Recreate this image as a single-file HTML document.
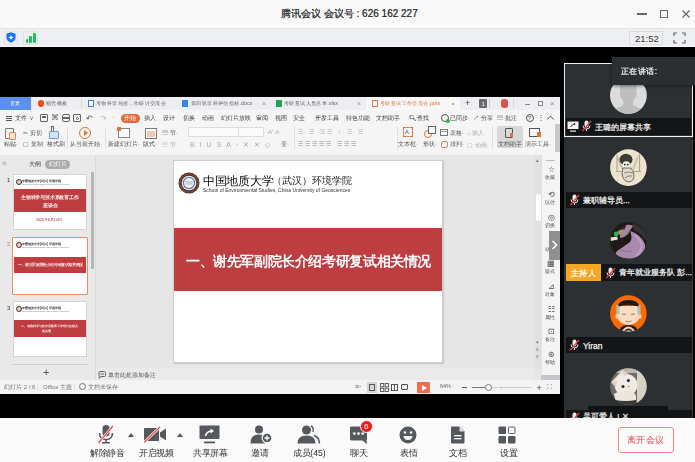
<!DOCTYPE html>
<html><head><meta charset="utf-8">
<style>
*{box-sizing:border-box;margin:0;padding:0}
html,body{width:695px;height:462px;overflow:hidden;background:#000;font-family:"Liberation Sans",sans-serif}
.a{position:absolute}
.t{position:absolute;white-space:nowrap;line-height:1}
#titlebar{left:0;top:0;width:695px;height:28px;background:#f9f9f9}
#tb2{left:0;top:28px;width:695px;height:19px;background:linear-gradient(#e3e4e6 0,#e3e4e6 1.5px,#eeeff2 1.5px,#eeeff2 18px,#f8f8fa 18px)}
#bottom{left:0;top:418px;width:695px;height:44px;background:#fafafa}
#wps{left:0;top:97px;width:560px;height:296.5px;background:#f3f3f3;overflow:hidden}
#panel{left:564px;top:136px;width:129px;height:282px;background:#2d3033;border-right:1px solid #383b3e}
.lbl{font-size:9px;color:#333;top:449px;transform:scale(1.08);transform-origin:0 0}
.ico{fill:#55585d}
</style></head><body>
<!-- title bar -->
<div id="titlebar" class="a">
  <div class="t" style="left:281px;top:9px;font-size:10px;color:#1a1a1a;-webkit-text-stroke:0.2px currentColor">腾讯会议 会议号 : 626 162 227</div>
  <div class="a" style="left:637px;top:13px;width:10px;height:1.5px;background:#666"></div>
  <div class="a" style="left:660px;top:10px;width:8px;height:8px;border:1.5px solid #666"></div>
  <svg class="a" style="left:682px;top:10px" width="8" height="8" viewBox="0 0 8 8"><path d="M0.5 0.5L7.5 7.5M7.5 0.5L0.5 7.5" stroke="#666" stroke-width="1.2"/></svg>
</div>
<div id="tb2" class="a">
  <div class="a" style="left:3.5px;top:3px;width:14px;height:14px;border:1px solid #e4e5e8;border-radius:1px"></div>
  <svg class="a" style="left:6px;top:4px" width="10" height="11" viewBox="0 0 10 11"><path d="M5 0.3 L9.6 1.8 L9.6 5.5 C9.6 8 7.5 9.8 5 10.7 C2.5 9.8 0.4 8 0.4 5.5 L0.4 1.8 Z" fill="#1b74ff"/><path d="M5 2.9 Q5.4 5 7.6 5.4 Q5.4 5.8 5 8 Q4.6 5.8 2.4 5.4 Q4.6 5 5 2.9Z" fill="#fff"/></svg>
  <div class="a" style="left:23px;top:3px;width:15px;height:14px;border:1px solid #e2e3e6;border-radius:1px"></div>
  <div class="a" style="left:25.5px;top:10.5px;width:2px;height:4.5px;background:#1ac35b;border-radius:1px"></div>
  <div class="a" style="left:29px;top:8px;width:2.5px;height:7px;background:#1ac35b;border-radius:1px"></div>
  <div class="a" style="left:33px;top:4.8px;width:2.5px;height:10.2px;background:#1ac35b;border-radius:1px"></div>
  <div class="a" style="left:629px;top:3px;width:34px;height:14px;border:1px solid #dcdde0;background:#eff0f2"></div>
  <div class="t" style="left:635px;top:6px;font-size:9.5px;color:#333">21:52</div>
  <svg class="a" style="left:673px;top:4px" width="13" height="12" viewBox="0 0 13 12"><path d="M1 4V1H4M9 1H12V4M12 8V11H9M4 11H1V8" fill="none" stroke="#666" stroke-width="1.2"/></svg>
</div>

<!-- WPS window -->
<div class="a" id="wrap" style="left:0;top:0;width:695px;height:462px;filter:blur(0.4px)">
<div id="wps" class="a"></div>
<!-- tab bar -->
<div class="a" style="left:0;top:97px;width:560px;height:13px;background:#eceef2"></div>
<div class="a" style="left:0;top:97px;width:31px;height:13px;background:#5d8ff0"></div>
<div class="t" style="left:10px;top:100px;font-size:6px;transform:scale(0.9);transform-origin:0 50%;color:#fff">首页</div>
<div class="a" style="left:38px;top:100px;width:6px;height:7px;border-radius:3px;background:#ee4a1e"></div>
<div class="t" style="left:46px;top:100px;font-size:6px;transform:scale(0.9);transform-origin:0 50%;color:#555">稻壳模板</div>
<div class="a" style="left:81px;top:99px;width:1px;height:9px;background:#d5d7dc"></div>
<div class="a" style="left:88px;top:100px;width:6px;height:7px;border:1px solid #3a7ee8;background:#fff"></div>
<div class="t" style="left:96px;top:100px;font-size:6px;transform:scale(0.9);transform-origin:0 50%;color:#666">考物科学与技…作研讨交流会</div>
<div class="a" style="left:182px;top:100px;width:6px;height:7px;background:#3b82f0"></div>
<div class="t" style="left:191px;top:100px;font-size:6px;transform:scale(0.9);transform-origin:0 50%;color:#666">第四轮学科评估指标.docx</div>
<div class="t" style="left:262px;top:100px;font-size:7px;color:#999">×</div>
<div class="a" style="left:276px;top:100px;width:6px;height:7px;background:#23a35a"></div>
<div class="t" style="left:284px;top:100px;font-size:6px;transform:scale(0.9);transform-origin:0 50%;color:#666">考研复试人员名单.xlsx</div>
<div class="t" style="left:357px;top:100px;font-size:7px;color:#999">×</div>
<div class="a" style="left:366px;top:97px;width:94px;height:13px;background:#f7f7f7"></div>
<div class="a" style="left:372px;top:100px;width:6px;height:7px;border:1px solid #e8703a"></div>
<div class="t" style="left:380px;top:100px;font-size:6px;transform:scale(0.9);transform-origin:0 50%;color:#e8703a">考研复试工作交流会.pptx</div>
<div class="a" style="left:452px;top:103px;width:2px;height:2px;border-radius:1px;background:#e8703a"></div>
<div class="t" style="left:465px;top:99px;font-size:9px;color:#444">+</div>
<div class="a" style="left:479px;top:99px;width:8px;height:9px;background:#6a6a6a;border-radius:1px"></div>
<div class="t" style="left:481.5px;top:100.5px;font-size:6px;color:#fff">1</div>
<div class="a" style="left:489px;top:99px;width:1px;height:9px;background:#ccc"></div>
<div class="a" style="left:513px;top:99px;width:1px;height:9px;background:#d8d8d8"></div>
<div class="a" style="left:501px;top:99px;width:7px;height:9px;border-radius:3px;background:#d9534f"></div>
<div class="a" style="left:525px;top:104px;width:5px;height:1px;background:#888"></div>
<div class="a" style="left:538px;top:101px;width:5px;height:5px;border:1px solid #888"></div>
<div class="t" style="left:550px;top:100px;font-size:8px;color:#888">×</div>
<!-- menu row -->
<div class="a" style="left:0;top:110px;width:560px;height:44px;background:#f5f5f5"></div>
<div class="a" style="left:6px;top:116px;width:6px;height:1px;background:#555;box-shadow:0 2px 0 #555,0 4px 0 #555"></div>
<div class="t" style="left:15px;top:115px;font-size:6px;color:#444">文件 ∨</div>
<div class="a" style="left:40px;top:114px;width:8px;height:8px;border:1px solid #666;border-radius:1px"></div>
<div class="a" style="left:42px;top:116px;width:4px;height:2px;border:1px solid #666"></div>
<div class="t" style="left:51px;top:114px;font-size:8px;color:#666">⌘</div>
<div class="a" style="left:62px;top:114px;width:8px;height:8px;border:1px solid #666;border-radius:2px"></div>
<div class="a" style="left:62px;top:117px;width:8px;height:2px;background:#666"></div>
<div class="a" style="left:73px;top:114px;width:8px;height:8px;border:1px solid #666;border-radius:1px"></div>
<div class="a" style="left:76px;top:117px;width:3px;height:3px;border:1px solid #666;border-radius:2px"></div>
<div class="t" style="left:86px;top:114.5px;font-size:8px;color:#555">↶</div>
<div class="t" style="left:93px;top:114px;font-size:6px;color:#888">·</div>
<div class="t" style="left:100px;top:114.5px;font-size:8px;color:#bbb">↷</div>
<div class="t" style="left:112px;top:114px;font-size:6px;color:#999">◦</div>
<div class="a" style="left:121px;top:114px;width:19px;height:9px;border-radius:5px;background:#e9683b"></div>
<div class="t" style="left:124px;top:115px;font-size:6px;color:#fff">开始</div>
<div class="t" style="left:144px;top:115px;font-size:6px;color:#444">插入</div>
<div class="t" style="left:163px;top:115px;font-size:6px;color:#444">设计</div>
<div class="t" style="left:183px;top:115px;font-size:6px;color:#444">切换</div>
<div class="t" style="left:202px;top:115px;font-size:6px;color:#444">动画</div>
<div class="t" style="left:221px;top:115px;font-size:6px;color:#444">幻灯片放映</div>
<div class="t" style="left:256px;top:115px;font-size:6px;color:#444">审阅</div>
<div class="t" style="left:275px;top:115px;font-size:6px;color:#444">视图</div>
<div class="t" style="left:293px;top:115px;font-size:6px;color:#444">安全</div>
<div class="t" style="left:315px;top:115px;font-size:6px;color:#222">开发工具</div>
<div class="t" style="left:346px;top:115px;font-size:6px;color:#444">特色功能</div>
<div class="t" style="left:376px;top:115px;font-size:6px;color:#444">文档助手</div>
<div class="t" style="left:409px;top:115px;font-size:6px;color:#444">🔍︎查找</div>
<div class="a" style="left:441px;top:114px;width:8px;height:8px;border:1px solid #555;border-radius:4px"></div>
<div class="a" style="left:446px;top:119px;width:4px;height:4px;border-radius:2px;background:#2bb24c"></div>
<div class="t" style="left:450px;top:115px;font-size:6px;color:#444">已同步·</div>
<div class="t" style="left:473px;top:115px;font-size:6px;color:#444">↗ 分享</div>
<div class="t" style="left:497px;top:115px;font-size:6px;color:#444">▤ 批注</div>
<div class="a" style="left:526px;top:114px;width:8px;height:8px;border:1px solid #555;border-radius:4px"></div>
<div class="t" style="left:528px;top:115px;font-size:6px;color:#555">?</div>
<div class="t" style="left:537px;top:114px;font-size:8px;color:#555">⋮</div>
<svg class="a" style="left:547px;top:115px" width="7" height="5" viewBox="0 0 7 5"><path d="M0.5 4.5L3.5 1L6.5 4.5" stroke="#555" stroke-width="1" fill="none"/></svg>



<!-- ribbon -->
<div class="a" style="left:5px;top:128px;width:9px;height:11px;border:1px solid #777;border-radius:1px"></div>
<div class="a" style="left:9px;top:132px;width:7px;height:8px;background:#fbe3d4;border:1px solid #e8864f;border-radius:1px"></div>
<div class="t" style="left:4px;top:141px;font-size:6px;color:#555">粘贴·</div>
<div class="t" style="left:23px;top:130px;font-size:6px;color:#555">✂ 剪切</div>
<div class="t" style="left:23px;top:141px;font-size:6px;color:#555">▢ 复制</div>
<div class="a" style="left:51px;top:126px;width:3px;height:5px;border:1px solid #666;border-bottom:0"></div>
<div class="a" style="left:49px;top:131px;width:10px;height:8px;background:#d6e3f6;border:1px solid #7a9bd6;border-radius:1px"></div>
<div class="t" style="left:47px;top:141px;font-size:6px;color:#555">格式刷</div>
<div class="a" style="left:67px;top:127px;width:1px;height:22px;background:#e0e0e0"></div>
<div class="a" style="left:79px;top:127px;width:12px;height:12px;border:1px solid #e0703a;border-radius:6px"></div>
<div class="a" style="left:84px;top:130px;width:0;height:0;border-left:4px solid #e0703a;border-top:3px solid transparent;border-bottom:3px solid transparent"></div>
<div class="t" style="left:70px;top:141px;font-size:6px;color:#555">从当前开始·</div>
<div class="a" style="left:105px;top:127px;width:1px;height:22px;background:#e0e0e0"></div>
<div class="a" style="left:118px;top:128px;width:12px;height:10px;border:1px solid #888;background:#fff"></div>
<div class="a" style="left:117px;top:127px;width:4px;height:4px;background:#e8703a"></div>
<div class="t" style="left:108px;top:141px;font-size:6px;color:#555">新建幻灯片·</div>
<div class="a" style="left:145px;top:128px;width:12px;height:11px;border:1px solid #777;background:#fff"></div>
<div class="a" style="left:147px;top:131px;width:8px;height:6px;background:#f2c9b4"></div>
<div class="t" style="left:143px;top:141px;font-size:6px;color:#555">版式·</div>
<div class="t" style="left:162px;top:130px;font-size:6px;color:#555">▤ 节·</div>
<div class="t" style="left:162px;top:142px;font-size:6px;color:#aaa">▤ 节·</div>
<div class="a" style="left:188px;top:127px;width:76px;height:10px;border:1px solid #dcdcdc;background:#fafafa"></div>
<div class="a" style="left:238px;top:127px;width:1px;height:10px;background:#dcdcdc"></div>
<div class="t" style="left:268px;top:129px;font-size:6px;color:#aaa">A⁺ A⁻</div>
<div class="t" style="left:190px;top:141px;font-size:7px;color:#aaa;letter-spacing:5px">BIUSA·✕✕◇</div>
<div class="t" style="left:281px;top:141px;font-size:6px;color:#666">变·</div>
<div class="a" style="left:294px;top:127px;width:1px;height:22px;background:#e0e0e0"></div>
<div class="t" style="left:298px;top:129px;font-size:6px;color:#aaa;letter-spacing:2px">☰·☰·☰☰ ↕·☰·☰</div>
<div class="t" style="left:298px;top:141px;font-size:6px;color:#888;letter-spacing:2px">☰☰☰☰☰ ☰☰☰</div>
<div class="a" style="left:397px;top:127px;width:1px;height:22px;background:#e0e0e0"></div>
<div class="a" style="left:403px;top:127px;width:10px;height:10px;border:1px dashed #e0703a"></div>
<div class="t" style="left:405px;top:129px;font-size:6px;color:#555">A</div>
<div class="t" style="left:398px;top:141px;font-size:6px;color:#555">文本框·</div>
<div class="a" style="left:424px;top:130px;width:8px;height:8px;border:1px solid #e0703a;border-radius:4px"></div>
<div class="a" style="left:428px;top:126px;width:8px;height:8px;border:1px solid #666;background:#f5f5f5"></div>
<div class="t" style="left:423px;top:141px;font-size:6px;color:#555">形状·</div>
<div class="a" style="left:440px;top:129px;width:8px;height:7px;border:1px solid #777"></div><div class="a" style="left:441px;top:131px;width:6px;height:1px;background:#999"></div>
<div class="t" style="left:450px;top:130px;font-size:6px;color:#555">表格·</div>
<div class="a" style="left:440.5px;top:141px;width:7px;height:7px;border:1px solid #c98a6a;border-radius:2px"></div>
<div class="t" style="left:450px;top:141px;font-size:6px;color:#555">排列·</div>
<div class="t" style="left:467px;top:130px;font-size:6px;color:#aaa">⌂ 插入·</div>
<div class="t" style="left:467px;top:142px;font-size:6px;color:#aaa">▢ 动画·</div>
<div class="a" style="left:492px;top:127px;width:1px;height:22px;background:#e0e0e0"></div>
<div class="a" style="left:497px;top:126px;width:26px;height:22px;background:#d8d8d8;border-radius:2px"></div>
<div class="a" style="left:505px;top:128px;width:8px;height:10px;border:1px solid #555;border-radius:1px"></div>
<div class="a" style="left:510px;top:133px;width:3px;height:4px;background:#e8703a"></div>
<div class="t" style="left:498px;top:141px;font-size:6px;color:#555">文档助手</div>
<div class="a" style="left:529px;top:128px;width:11px;height:9px;border:1px solid #555"></div>
<div class="a" style="left:537px;top:132px;width:4px;height:5px;background:#e8703a"></div>
<div class="t" style="left:525px;top:141px;font-size:6px;color:#555">演示工具·</div>
<div class="a" style="left:555px;top:124px;width:5px;height:28px;background:#c9c9c9"></div>
<!-- below ribbon -->
<div class="a" style="left:0;top:155px;width:96px;height:225px;background:#e9e9e9"></div>
<div class="a" style="left:95px;top:155px;width:1px;height:225px;background:#dcdcdc"></div>
<div class="a" style="left:96px;top:155px;width:446px;height:225px;background:#e6e6e6"></div>
<div class="t" style="left:2px;top:159px;font-size:9px;color:#999">«</div>
<div class="t" style="left:29px;top:161px;font-size:6px;color:#333">大纲</div>
<div class="a" style="left:45px;top:159.5px;width:24.5px;height:9px;border-radius:4.5px;background:#aaaaaa"></div>
<div class="t" style="left:48.5px;top:161px;font-size:6px;color:#fff">幻灯片</div>
<div class="a" style="left:91px;top:172px;width:3px;height:97px;background:#b5b5b5;border-radius:1px"></div>
<!-- thumb 1 -->
<div class="t" style="left:7px;top:177px;font-size:6px;color:#333">1</div>
<div class="a" style="left:13px;top:174px;width:74px;height:56px;background:#fff;border:1px solid #d4d4d4"></div>
<div class="a" style="left:15.5px;top:179px;width:6px;height:6px;border-radius:3px;border:1.6px solid #5a2b20;background:#d8d0cc"></div>
<div class="t" style="left:22px;top:180px;font-size:3px;font-weight:bold;color:#333">中国地质大学(武汉) 环境学院</div>
<div class="t" style="left:22px;top:184px;font-size:1.6px;color:#777">School of Environmental Studies, China University of Geosciences</div>
<div class="a" style="left:14px;top:189px;width:72px;height:23px;background:#bd3d40"></div>
<div class="t" style="left:21px;top:195px;font-size:5px;transform:scale(0.96);transform-origin:0 0;font-weight:bold;color:#fbeaea">生物科学与技术系教育工作</div>
<div class="t" style="left:43px;top:203px;font-size:5px;transform:scale(0.96);transform-origin:0 0;font-weight:bold;color:#fbeaea">座谈会</div>
<div class="t" style="left:36px;top:218px;font-size:4px;transform:scale(0.92);transform-origin:0 0;color:#a81818">2020年6月14日</div>
<!-- thumb 2 -->
<div class="t" style="left:7px;top:241px;font-size:6px;color:#e8703a">2</div>
<div class="a" style="left:12px;top:237px;width:76px;height:58px;background:#fff;border:1.5px solid #ef8a5a;border-radius:1px"></div>
<div class="a" style="left:15.5px;top:242px;width:6px;height:6px;border-radius:3px;border:1.6px solid #5a2b20;background:#d8d0cc"></div>
<div class="t" style="left:22px;top:243px;font-size:3px;font-weight:bold;color:#333">中国地质大学(武汉) 环境学院</div>
<div class="t" style="left:22px;top:247px;font-size:1.6px;color:#777">School of Environmental Studies, China University of Geosciences</div>
<div class="a" style="left:14px;top:257px;width:72px;height:16px;background:#bd3d40"></div>
<div class="t" style="left:18px;top:263px;font-size:4px;transform:scale(0.9);transform-origin:0 0;font-weight:bold;color:#fbeaea">一、谢先军副院长介绍考研复试相关情况</div>
<!-- thumb 3 -->
<div class="t" style="left:7px;top:305px;font-size:6px;color:#333">3</div>
<div class="a" style="left:13px;top:301px;width:74px;height:56px;background:#fff;border:1px solid #d4d4d4"></div>
<div class="a" style="left:15.5px;top:306px;width:6px;height:6px;border-radius:3px;border:1.6px solid #5a2b20;background:#d8d0cc"></div>
<div class="t" style="left:22px;top:307px;font-size:3px;font-weight:bold;color:#333">中国地质大学(武汉) 环境学院</div>
<div class="t" style="left:22px;top:311px;font-size:1.6px;color:#777">School of Environmental Studies, China University of Geosciences</div>
<div class="a" style="left:14px;top:320px;width:72px;height:17px;background:#bd3d40"></div>
<div class="t" style="left:21px;top:325px;font-size:3px;font-weight:bold;color:#fbeaea">二、考物科学与技术系教育工作研讨会相关</div>
<div class="t" style="left:42px;top:329.5px;font-size:3px;font-weight:bold;color:#fbeaea">相关情</div><div class="t" style="display:none"></div>
<div class="a" style="left:12px;top:364px;width:76px;height:1px;background:#d0d0d0"></div>
<div class="t" style="left:43px;top:367px;font-size:11px;color:#555">+</div>
<!-- canvas -->
<div class="a" style="left:173px;top:160px;width:270px;height:203px;background:#fff;border:1px solid #cfcfcf;box-shadow:1px 1px 1px rgba(0,0,0,.12)"></div>
<div class="a" style="left:174px;top:228px;width:268px;height:63px;background:#bd3d40"></div>
<div class="t" style="left:186px;top:253.5px;font-size:13px;transform:scale(1.047);transform-origin:0 0;font-weight:bold;color:#fff;font-family:'Liberation Serif',serif">一、谢先军副院长介绍考研复试相关情况</div>
<!-- notes -->
<div class="a" style="left:96px;top:368px;width:438px;height:12px;background:#eaeaea"></div>
<svg class="a" style="left:98px;top:371px" width="8" height="8" viewBox="0 0 8 8"><path d="M1 1.5Q1 0.5 2 0.5H6.5Q7.5 0.5 7.5 1.5V4.5Q7.5 5.5 6.5 5.5H3L1.2 7.3V5.4Q1 5.2 1 4.5Z" fill="none" stroke="#555" stroke-width="0.9"/><path d="M2.5 3H6" stroke="#555" stroke-width="0.9"/></svg>
<div class="t" style="left:107.5px;top:372px;font-size:6px;color:#555">单击此处添加备注</div>
<!-- v scrollbar + sidebar -->
<div class="a" style="left:534px;top:155px;width:8px;height:214px;background:#e1e1e1"></div>
<div class="t" style="left:536px;top:158px;font-size:5px;color:#777">▴</div>
<div class="a" style="left:535.5px;top:194px;width:5px;height:27px;background:#fff;border-radius:3px"></div>
<div class="a" style="left:542px;top:154px;width:18px;height:226px;background:#f4f4f4"></div>
<div class="a" style="left:541px;top:375px;width:19px;height:5px;background:#c6c6ca"></div>


<!-- sidebar icons -->
<div class="a" style="left:546px;top:160px;width:9px;height:1px;background:#bbb"></div>
<div class="t" style="left:546px;top:166px;font-size:8px;color:#444;width:10px;text-align:center">☆</div>
<div class="t" style="left:545px;top:175px;font-size:5px;color:#555">收藏</div>
<div class="t" style="left:546px;top:190.5px;font-size:8px;color:#444;width:10px;text-align:center">⟲</div>
<div class="t" style="left:545px;top:199.5px;font-size:5px;color:#555">以往</div>
<div class="t" style="left:546px;top:214px;font-size:8px;color:#444;width:10px;text-align:center">◎</div>
<div class="t" style="left:545px;top:223px;font-size:5px;color:#555">切换</div>
<div class="t" style="left:546px;top:238px;font-size:8px;color:#444;width:10px;text-align:center">♨</div>
<div class="t" style="left:545px;top:247px;font-size:5px;color:#555">动画</div>
<div class="t" style="left:546px;top:260px;font-size:8px;color:#444;width:10px;text-align:center">▦</div>
<div class="t" style="left:545px;top:269px;font-size:5px;color:#555">版式</div>
<div class="t" style="left:546px;top:283px;font-size:8px;color:#444;width:10px;text-align:center">⊿</div>
<div class="t" style="left:545px;top:292px;font-size:5px;color:#555">对象</div>
<div class="t" style="left:546px;top:305.5px;font-size:8px;color:#444;width:10px;text-align:center">☷</div>
<div class="t" style="left:545px;top:314.5px;font-size:5px;color:#555">属性</div>
<div class="t" style="left:546px;top:328px;font-size:8px;color:#444;width:10px;text-align:center">⊡</div>
<div class="t" style="left:545px;top:337px;font-size:5px;color:#555">备注</div>
<div class="t" style="left:546px;top:350.5px;font-size:8px;color:#444;width:10px;text-align:center">⊛</div>
<div class="t" style="left:545px;top:359.5px;font-size:5px;color:#555">帮助</div>
<div class="t" style="left:536px;top:339px;font-size:5px;color:#777;line-height:7px;width:6px;white-space:normal">▾<br>≡<br>≡</div>
<div class="a" style="left:549px;top:231px;width:11px;height:29px;background:#8a8a8a;opacity:.95"></div>
<svg class="a" style="left:551px;top:240px" width="7" height="10" viewBox="0 0 7 10"><path d="M1.5 1L5.5 5L1.5 9" stroke="#fff" stroke-width="1.5" fill="none"/></svg>
<!-- status bar -->
<div class="a" style="left:0;top:380px;width:560px;height:13.5px;background:#f3f3f3"></div>
<div class="t" style="left:4px;top:384px;font-size:6px;color:#777">幻灯片 2 / 6</div>
<div class="a" style="left:37px;top:382px;width:1px;height:9px;background:#e6e6e6"></div>
<div class="t" style="left:43px;top:384px;font-size:6px;color:#777">Office 主题</div>
<div class="a" style="left:74px;top:382px;width:1px;height:9px;background:#e6e6e6"></div>
<div class="a" style="left:79px;top:383px;width:7px;height:7px;border:0.8px solid #777;border-radius:4px"></div>
<div class="t" style="left:88px;top:384px;font-size:6px;color:#777">文档未保存</div>
<div class="t" style="left:355px;top:383px;font-size:7px;color:#555">≡·</div>
<div class="a" style="left:367px;top:382px;width:10px;height:11px;background:#d6d6d6"></div>
<div class="a" style="left:369px;top:384px;width:6px;height:7px;border:1px solid #555"></div>
<svg class="a" style="left:380px;top:383px" width="9" height="9" viewBox="0 0 9 9"><rect x="0.5" y="0.5" width="3.3" height="3.3" fill="none" stroke="#555" stroke-width="0.9"/><rect x="5.2" y="0.5" width="3.3" height="3.3" fill="none" stroke="#555" stroke-width="0.9"/><rect x="0.5" y="5.2" width="3.3" height="3.3" fill="none" stroke="#555" stroke-width="0.9"/><rect x="5.2" y="5.2" width="3.3" height="3.3" fill="none" stroke="#555" stroke-width="0.9"/></svg>
<div class="a" style="left:391px;top:384px;width:7px;height:7px;border:1px solid #555"></div>
<div class="a" style="left:394px;top:384px;width:1px;height:7px;background:#555"></div>
<div class="a" style="left:401px;top:384px;width:7px;height:6px;border:1px solid #555;border-radius:1px"></div>
<div class="a" style="left:417px;top:382px;width:13px;height:11px;background:#ef6d4d;border-radius:1px"></div>
<div class="a" style="left:422px;top:384.5px;width:0;height:0;border-left:5px solid #fff;border-top:3px solid transparent;border-bottom:3px solid transparent"></div>
<div class="t" style="left:433px;top:384px;font-size:5px;color:#888">·</div>
<div class="t" style="left:440px;top:384px;font-size:5.5px;color:#666">64% ·</div>
<div class="a" style="left:462px;top:387px;width:5px;height:1px;background:#555"></div>
<div class="a" style="left:472px;top:387px;width:16px;height:1px;background:#777"></div>
<div class="a" style="left:488px;top:387px;width:44px;height:1px;background:#cfcfcf"></div>
<div class="a" style="left:501px;top:385.5px;width:1px;height:3px;background:#ccc"></div>
<div class="a" style="left:485px;top:384px;width:7px;height:7px;border:1px solid #777;border-radius:4px;background:#fff"></div>
<div class="t" style="left:536.5px;top:384px;font-size:9px;color:#444">+</div>
<div class="t" style="left:547px;top:383px;font-size:7px;color:#777">⛶</div>
<!-- logo on canvas -->
<svg class="a" style="left:178px;top:172px" width="22" height="22" viewBox="0 0 22 22"><circle cx="11" cy="11" r="10.5" fill="#5a2c22"/><circle cx="11" cy="11" r="9" fill="none" stroke="#9a6a5a" stroke-width="1.2" stroke-dasharray="0.8 0.6"/><circle cx="11" cy="11" r="7.3" fill="#f8f6f3"/><circle cx="11" cy="11" r="5.6" fill="none" stroke="#5a7cc0" stroke-width="1.3"/><path d="M7 10H15M7.5 12H14.5" stroke="#9aa6b8" stroke-width="0.9"/></svg>
<div class="t" style="left:203px;top:174.5px;font-size:12px;font-weight:normal;color:#0a0a0a;font-family:'Liberation Serif',serif;letter-spacing:-0.3px">中国地质大学</div>
<div class="t" style="left:272px;top:175.5px;font-size:10px;color:#222;font-family:'Liberation Serif',serif">（武汉）环境学院</div>
<div class="t" style="left:203px;top:188px;font-size:5px;transform:scaleX(1.0);transform-origin:0 0;color:#333">School of Environmental Studies,  China University of Geosciences</div>

</div>
<!-- right panel -->
<div id="panel" class="a"></div>
<!-- tile 1 -->
<div class="a" style="left:564px;top:63px;width:129px;height:74px;border:1.5px solid #f2f2f2;background:#2d3033"></div>
<svg class="a" style="left:610px;top:76.5px" width="37" height="37" viewBox="0 0 37 37"><defs><clipPath id="c1"><circle cx="18.4" cy="18.4" r="18.4"/></clipPath></defs><g clip-path="url(#c1)"><rect width="37" height="37" fill="#dcdcdc"/><path d="M10 4 Q10 0 18.3 0 Q26.5 0 26.5 4 L26.5 15 Q26.5 19 25 21 Q22 25 23.5 28 Q26 30.5 33 32 L37 37 L0 37 L3.5 32 Q10.5 30.5 13 28 Q14.5 25 11.5 21 Q10 19 10 15Z" fill="#bebebe"/></g></svg>
<div class="a" style="left:566px;top:118px;width:125px;height:17px;background:#141517"></div>
<svg class="a" style="left:567px;top:121px" width="12" height="11" viewBox="0 0 12 11"><rect x="0.5" y="0.5" width="11" height="7.5" fill="#f0f0f0"/><path d="M3.5 6 Q5 3 8 3" stroke="#333" stroke-width="1" fill="none"/><path d="M7 1.8 L8.6 3 L7 4.3" fill="#333"/><rect x="3" y="9.5" width="6" height="1.2" fill="#f0f0f0"/></svg>
<svg class="a" style="left:581px;top:120px" width="11" height="12" viewBox="0 0 11 12"><rect x="3.5" y="0.5" width="4" height="7" rx="2" fill="#e8e8e8"/><path d="M2 5.5 Q2 9 5.5 9 Q9 9 9 5.5" stroke="#e8e8e8" stroke-width="1" fill="none"/><rect x="5" y="9" width="1" height="2" fill="#e8e8e8"/><path d="M1.5 11 L10 1" stroke="#e8403f" stroke-width="1.2"/></svg>
<div class="t" style="left:595px;top:123.5px;font-size:8px;color:#f2f2f2;-webkit-text-stroke:0.25px currentColor">王璐的屏幕共享</div>
<div class="a" style="left:612px;top:57px;width:83px;height:28px;background:#2c2f32;box-shadow:0 1px 3px rgba(0,0,0,.5)"></div>
<div class="t" style="left:621px;top:67px;font-size:9px;transform:scale(0.94);transform-origin:0 0;color:#f0f0f0;-webkit-text-stroke:0.25px currentColor">正在讲话:</div>
<!-- tile 2 -->
<svg class="a" style="left:606px;top:145px" width="45" height="45" viewBox="0 0 45 45"><defs><clipPath id="c2"><circle cx="22.4" cy="22.6" r="18.3"/></clipPath></defs><g clip-path="url(#c2)"><rect width="45" height="45" fill="#efe6d0"/>
<path d="M4 15H41M4 22H41M4 30H41M12 4V41M20 4V41M28 4V41M35 4V41" stroke="#ddd3bd" stroke-width="0.5"/>
<path d="M11 10V27M33.5 9V26M10 26.5H35" stroke="#aaa494" stroke-width="1.1" fill="none"/>
<path d="M12 12Q14 20 17 25M32 11Q30 18 27 24" stroke="#c4bcaa" stroke-width="1.5" fill="none"/>
<ellipse cx="20" cy="14.5" rx="6.5" ry="5.8" fill="#3e3c38"/>
<ellipse cx="20.3" cy="19.5" rx="3.6" ry="3.2" fill="#f4efe6"/>
<circle cx="18.8" cy="19.6" r="0.9" fill="#222"/><circle cx="21.8" cy="19.6" r="0.9" fill="#222"/>
<path d="M17 23Q15 28 17 33Q19 37 23 37Q28 36 28 31Q28 26 25 23Z" fill="#e2dac8" stroke="#555" stroke-width="0.8"/>
<path d="M18 28Q23 26 27 28M19 33Q22 30 26 31" stroke="#666" stroke-width="0.7" fill="none"/>
</g></svg>
<div class="a" style="left:566px;top:192px;width:126px;height:16px;background:#141517"></div>
<svg class="a" style="left:569px;top:194px" width="11" height="12" viewBox="0 0 11 12"><rect x="3.5" y="0.5" width="4" height="7" rx="2" fill="#e8e8e8"/><path d="M2 5.5 Q2 9 5.5 9 Q9 9 9 5.5" stroke="#e8e8e8" stroke-width="1" fill="none"/><rect x="5" y="9" width="1" height="2" fill="#e8e8e8"/><path d="M1.5 11 L10 1" stroke="#e8403f" stroke-width="1.2"/></svg>
<div class="t" style="left:583px;top:196.5px;font-size:8px;color:#f2f2f2;-webkit-text-stroke:0.25px currentColor">兼职辅导员...</div>
<!-- tile 3 -->
<svg class="a" style="left:606px;top:218px" width="45" height="45" viewBox="0 0 45 45"><defs><clipPath id="c3"><circle cx="22.4" cy="22.5" r="18.3"/></clipPath></defs><g clip-path="url(#c3)"><rect width="45" height="45" fill="#1e1a18"/>
<path d="M26 5Q36 8 42 20L42 25Q36 16 28 12Z" fill="#3b3234"/>
<path d="M8 16Q12 10 19 9Q22 9 22 12L17 17Z" fill="#3d2c26"/>
<path d="M12 13Q16 10.5 20 12Q19 16 15.5 17.5Q12 17 12 13Z" fill="#b88f7e"/>
<path d="M20 7Q24 6 27 8Q24 12 22 16Q19 19 15 20Q13 19 14.5 17Q19 13 20 7Z" fill="#a7879e"/>
<path d="M24 13Q31 15 36 21Q41 27 39 33Q35 40 27 41Q17 41 9 37Q10 33 14 31Q20 27 24 24Q27 20 24 13Z" fill="#a98aae"/>
<path d="M29 17Q35 22 36 28Q35 34 30 38" stroke="#bca0c3" stroke-width="2.2" fill="none"/>
<path d="M14 32Q20 34 26 33" stroke="#8f7394" stroke-width="1.2" fill="none"/>
<path d="M4.4 19.5L11.2 18.5L11.8 21.5L5 23Z" fill="#e6e2dd"/>
<circle cx="10.2" cy="16" r="2.4" fill="#2fb64e"/>
</g></svg>
<div class="a" style="left:566px;top:264px;width:126px;height:17px;background:#141517"></div>
<div class="a" style="left:566px;top:264px;width:35px;height:17px;background:#f5a623"></div>
<div class="t" style="left:570.5px;top:268.5px;font-size:9px;transform:scale(0.94);transform-origin:0 0;color:#fff;-webkit-text-stroke:0.25px currentColor">主持人</div>
<svg class="a" style="left:605px;top:267px" width="11" height="12" viewBox="0 0 11 12"><rect x="3.5" y="0.5" width="4" height="7" rx="2" fill="#e8e8e8"/><path d="M2 5.5 Q2 9 5.5 9 Q9 9 9 5.5" stroke="#e8e8e8" stroke-width="1" fill="none"/><rect x="5" y="9" width="1" height="2" fill="#e8e8e8"/><path d="M1.5 11 L10 1" stroke="#e8403f" stroke-width="1.2"/></svg>
<div class="t" style="left:619px;top:268.5px;font-size:8px;color:#f2f2f2;-webkit-text-stroke:0.25px currentColor">青年就业服务队 彭...</div>
<!-- tile 4 -->
<svg class="a" style="left:606px;top:291px" width="45" height="45" viewBox="0 0 45 45"><defs><clipPath id="c4"><circle cx="22.4" cy="22.6" r="18.3"/></clipPath></defs><g clip-path="url(#c4)"><rect width="45" height="45" fill="#ff6a00"/>
<path d="M11 15Q11 24 12 28Q14 33 22.5 34Q31 33 33 28Q34 24 34 15Z" fill="#f9dcc2"/>
<path d="M10.5 14V25Q12 24 13.5 23V14Z" fill="#a9c3bc"/><path d="M34.5 14V25Q33 24 31.5 23V14Z" fill="#a9c3bc"/>
<path d="M12.5 15.5Q12 9 22.5 9Q33 9 32.5 15.5Q22.5 13 12.5 15.5Z" fill="#1a1a1a"/>
<ellipse cx="11" cy="25.5" rx="1.6" ry="2.4" fill="#f3d0b3"/><ellipse cx="34" cy="25.5" rx="1.6" ry="2.4" fill="#f3d0b3"/>
<path d="M16 23.2H20M25 23.2H29" stroke="#8a7a70" stroke-width="1"/>
<path d="M19.5 30Q22.5 32 25.5 30" stroke="#b07050" stroke-width="0.9" fill="none"/>
<path d="M14 45V38Q16 34 22.5 34Q29 34 31 38V45Z" fill="#1e1e1e"/>
<path d="M17 40Q22.5 33 28 40" stroke="#f3d0b3" stroke-width="2" fill="none"/>
<ellipse cx="22.5" cy="40.5" rx="3" ry="1.5" fill="#999"/>
</g></svg>
<div class="a" style="left:566px;top:337px;width:126px;height:16px;background:#141517"></div>
<svg class="a" style="left:569px;top:339px" width="11" height="12" viewBox="0 0 11 12"><rect x="3.5" y="0.5" width="4" height="7" rx="2" fill="#e8e8e8"/><path d="M2 5.5 Q2 9 5.5 9 Q9 9 9 5.5" stroke="#e8e8e8" stroke-width="1" fill="none"/><rect x="5" y="9" width="1" height="2" fill="#e8e8e8"/><path d="M1.5 11 L10 1" stroke="#e8403f" stroke-width="1.2"/></svg>
<div class="t" style="left:583px;top:342px;font-size:8.5px;color:#f2f2f2;-webkit-text-stroke:0.25px currentColor">Yiran</div>
<!-- tile 5 -->
<svg class="a" style="left:606px;top:364px" width="45" height="45" viewBox="0 0 45 45"><defs><clipPath id="c5"><circle cx="22.4" cy="22.5" r="18.3"/></clipPath></defs><g clip-path="url(#c5)"><rect width="45" height="45" fill="#6e6c68"/>
<rect x="31" y="0" width="14" height="45" fill="#d8d2c4"/>
<rect x="0" y="0" width="31" height="9" fill="#bdb8ae"/>
<path d="M0 30Q12 34 30 34L30 45H0Z" fill="#3c3a36"/>
<path d="M16.5 6L22 10L10.5 19L5 18.5Z" fill="#eadfd6"/>
<ellipse cx="20" cy="21" rx="11.5" ry="11" fill="#efebe4"/>
<path d="M16 5.8L18 12L22.5 10Z" fill="#e9c9c4"/><path d="M5 18.5L11 17L10 23.5Z" fill="#e9c9c4"/>
<path d="M8 30Q14 26 26 27Q31 30 30 36Q20 38 9 36Z" fill="#ebe6dd"/>
<circle cx="22.4" cy="16.6" r="1.5" fill="#1e1e1e"/><circle cx="17" cy="22.4" r="1.5" fill="#1e1e1e"/>
<circle cx="22.6" cy="22.4" r="0.9" fill="#e58a8a"/>
</g></svg>
<div class="a" style="left:566px;top:410px;width:126px;height:8px;background:#141517"></div>
<div class="a" style="left:588px;top:406px;width:80px;height:12px;background:#121315"></div>
<svg class="a" style="left:569px;top:412px" width="11" height="12" viewBox="0 0 11 12"><rect x="3.5" y="0.5" width="4" height="7" rx="2" fill="#e8e8e8"/><path d="M2 5.5 Q2 9 5.5 9 Q9 9 9 5.5" stroke="#e8e8e8" stroke-width="1" fill="none"/><path d="M1.5 11 L10 1" stroke="#e8403f" stroke-width="1.2"/></svg>
<div class="t" style="left:583px;top:413px;font-size:8px;color:#e8e8e8;-webkit-text-stroke:0.25px currentColor">吴可爱人 | ✕</div>


<!-- bottom bar -->
<div id="bottom" class="a"></div>
<!-- mic -->
<svg class="a" style="left:97px;top:424px" width="18" height="20" viewBox="0 0 18 20"><rect x="5.5" y="1" width="7" height="11.5" rx="3.5" fill="#55585d"/><path d="M2.5 9 Q2.5 15.5 9 15.5 Q15.5 15.5 15.5 9" stroke="#55585d" stroke-width="1.5" fill="none"/><rect x="8.25" y="15.5" width="1.5" height="3" fill="#55585d"/><rect x="5" y="18" width="8" height="1.5" fill="#55585d"/><path d="M1.5 19 L16 2" stroke="#fafafa" stroke-width="2.6"/><path d="M1.5 19 L16 2" stroke="#ef4a4c" stroke-width="1.2"/></svg>
<div class="a" style="left:128px;top:433px;width:0;height:0;border-left:3px solid transparent;border-right:3px solid transparent;border-bottom:4px solid #55585d"></div>
<div class="t lbl" style="top:449.8px;left:90px;font-size:8px">解除静音</div>
<!-- video -->
<svg class="a" style="left:143px;top:426px" width="25" height="17" viewBox="0 0 25 17"><rect x="1" y="2" width="15" height="13" rx="1" fill="#55585d"/><path d="M17 6.5 L23 2.5 L23 14.5 L17 10.5Z" fill="#55585d"/><path d="M1 16.5 L17 1" stroke="#fafafa" stroke-width="2.6"/><path d="M1 16.5 L17 1" stroke="#ef4a4c" stroke-width="1.2"/></svg>
<div class="a" style="left:177px;top:433px;width:0;height:0;border-left:3px solid transparent;border-right:3px solid transparent;border-bottom:4px solid #55585d"></div>
<div class="t lbl" style="top:449.8px;left:139px;font-size:8px">开启视频</div>
<!-- share -->
<svg class="a" style="left:199px;top:425px" width="21" height="19" viewBox="0 0 21 19"><rect x="0.5" y="0.5" width="20" height="13.5" rx="1" fill="#55585d"/><path d="M6.5 11 Q7.5 6.5 12.5 6" stroke="#fff" stroke-width="1.5" fill="none"/><path d="M11.5 3.5 L15 6 L11.5 8.5Z" fill="#fff"/><rect x="5" y="16.5" width="11" height="1.8" fill="#55585d"/></svg>
<div class="t lbl" style="top:449.8px;left:193px;font-size:8px">共享屏幕</div>
<!-- invite -->
<svg class="a" style="left:250px;top:425px" width="23" height="19" viewBox="0 0 23 19"><circle cx="9" cy="4.5" r="4" fill="#55585d"/><path d="M0.5 18.5 Q0.5 9.5 9 9.5 Q13 9.5 15 11.5 L15 18.5Z" fill="#55585d"/><circle cx="17" cy="13" r="5.5" fill="#fafafa"/><circle cx="17" cy="13" r="4.3" fill="#55585d"/><path d="M17 10.5V15.5M14.5 13H19.5" stroke="#fff" stroke-width="1.3"/></svg>
<div class="t lbl" style="top:449.8px;left:251px;font-size:8px">邀请</div>
<!-- members -->
<svg class="a" style="left:297px;top:425px" width="24" height="19" viewBox="0 0 24 19"><circle cx="9.5" cy="5" r="4.5" fill="#55585d"/><path d="M0.5 18.5 Q0.5 10.5 9.5 10.5 Q18.5 10.5 18.5 18.5Z" fill="#55585d"/><path d="M14 1 Q17 2.5 16 7" stroke="#55585d" stroke-width="1.4" fill="none"/><path d="M17 10.5 Q22.5 12.5 22.5 18.5" stroke="#55585d" stroke-width="1.5" fill="none"/></svg>
<div class="t lbl" style="top:449.8px;left:293px;font-size:8px">成员(45)</div>
<!-- chat -->
<svg class="a" style="left:349px;top:425px" width="20" height="20" viewBox="0 0 20 20"><path d="M1 2.8 Q1 1.4 2.4 1.4 H16.6 Q18 1.4 18 2.8 V14 Q18 15.4 16.6 15.4 H17.8 V19 L13.5 15.4 H2.4 Q1 15.4 1 14Z" fill="#55585d"/><circle cx="5.3" cy="8.6" r="1.4" fill="#fff"/><circle cx="9.5" cy="8.6" r="1.4" fill="#fff"/><circle cx="13.7" cy="8.6" r="1.4" fill="#fff"/></svg>
<div class="a" style="left:360px;top:420px;width:13px;height:13px;border-radius:50%;background:#f31c1c;border:1px solid #fafafa"></div>
<div class="t" style="left:364px;top:422.5px;font-size:8px;color:#fff">6</div>
<div class="t lbl" style="top:449.8px;left:350px;font-size:8px">聊天</div>
<!-- emoji -->
<svg class="a" style="left:399px;top:426px" width="18" height="18" viewBox="0 0 18 18"><circle cx="9" cy="9" r="8.5" fill="#55585d"/><circle cx="6" cy="6.5" r="1.3" fill="#fff"/><circle cx="12" cy="6.5" r="1.3" fill="#fff"/><path d="M4.5 10 H13.5 Q13 14 9 14 Q5 14 4.5 10Z" fill="#fff"/></svg>
<div class="t lbl" style="top:449.8px;left:400px;font-size:8px">表情</div>
<!-- doc -->
<svg class="a" style="left:450px;top:426px" width="15" height="18" viewBox="0 0 15 18"><path d="M1 1.5 Q1 0.5 2 0.5 H9.5 L14.5 5.5 V16.5 Q14.5 17.5 13.5 17.5 H2 Q1 17.5 1 16.5Z" fill="#55585d"/><path d="M9.5 0.5 V5.5 H14.5" fill="#dcdcdc"/><rect x="4" y="9" width="7.5" height="1.3" fill="#fff"/><rect x="4" y="12" width="7.5" height="1.3" fill="#fff"/></svg>
<div class="t lbl" style="top:449.8px;left:449px;font-size:8px">文档</div>
<!-- settings -->
<svg class="a" style="left:498px;top:426px" width="18" height="18" viewBox="0 0 18 18"><rect x="0.5" y="0.5" width="7.5" height="7.5" rx="1" fill="#55585d"/><rect x="10.5" y="1" width="6.5" height="6.5" rx="1" fill="none" stroke="#55585d" stroke-width="1"/><rect x="0.5" y="10" width="7.5" height="7.5" rx="1" fill="#55585d"/><rect x="10" y="10" width="7.5" height="7.5" rx="1" fill="#55585d"/></svg>
<div class="t lbl" style="top:449.8px;left:500px;font-size:8px">设置</div>
<!-- leave -->
<div class="a" style="left:618px;top:427px;width:56px;height:26px;border:1px solid #f08586;border-radius:3px"></div>
<div class="t" style="left:626.5px;top:436px;font-size:9px;transform:scale(1.04);transform-origin:0 0;color:#ee4548">离开会议</div>

</body></html>
